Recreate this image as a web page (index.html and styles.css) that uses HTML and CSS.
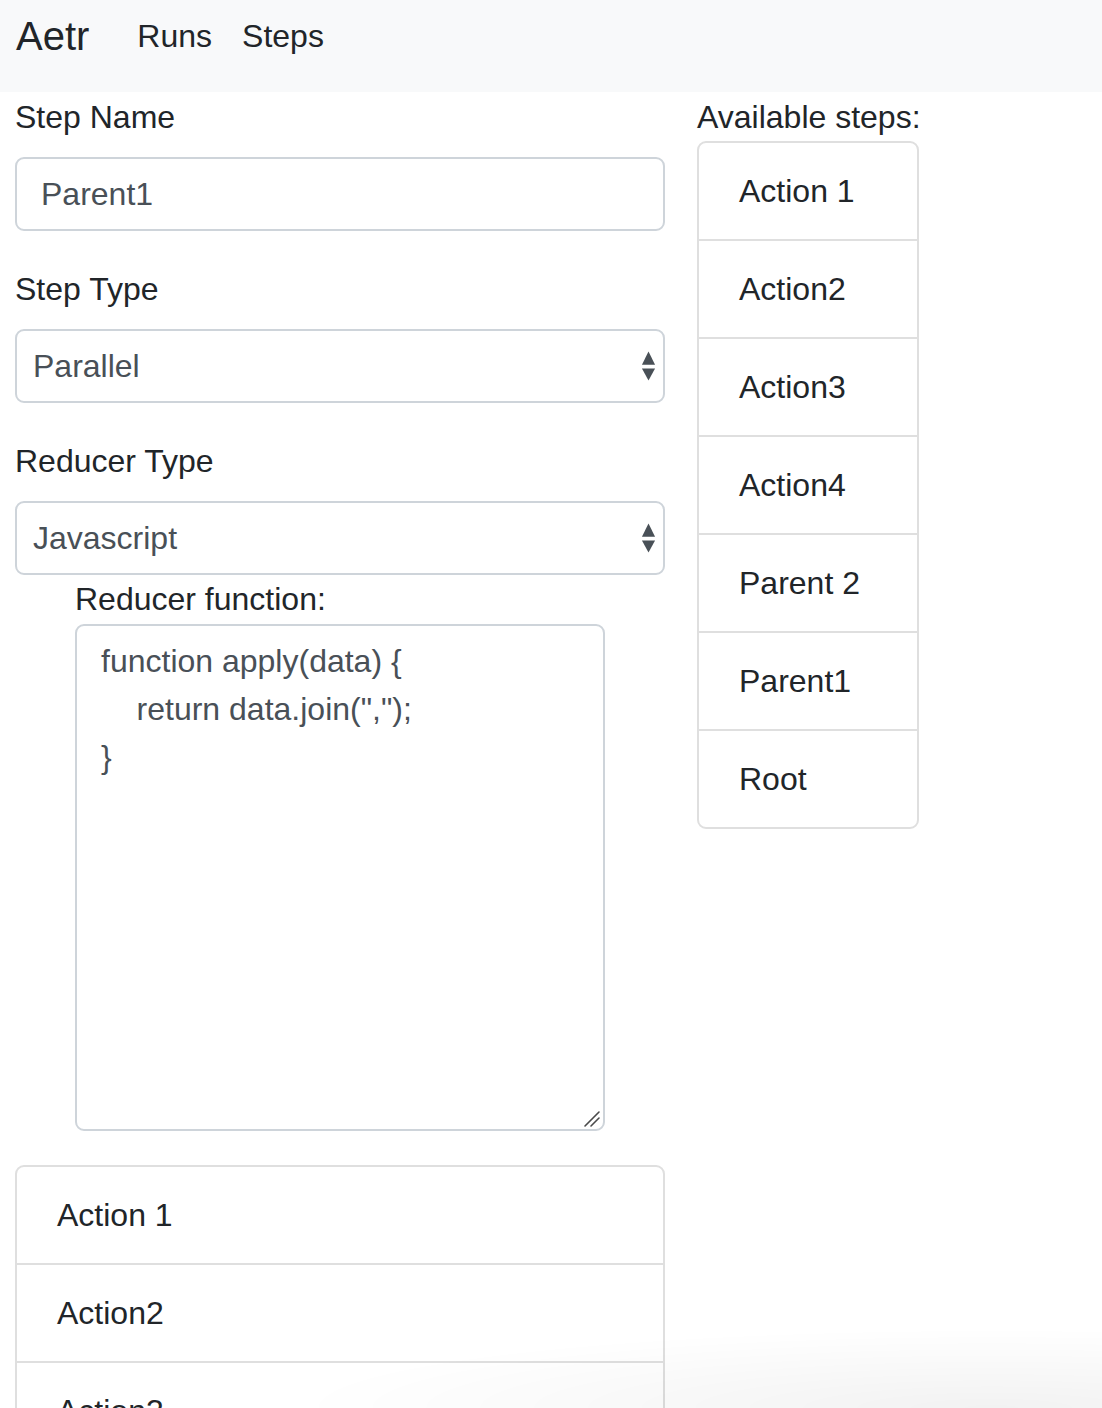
FILE: index.html
```html
<!DOCTYPE html>
<html lang="en">
<head>
<meta charset="utf-8">
<title>Aetr</title>
<link rel="stylesheet" href="styles.css">
</head>
<body>
<nav class="navbar">
  <a class="brand" href="#">Aetr</a>
  <a class="nav-link" href="#">Runs</a>
  <a class="nav-link" href="#">Steps</a>
</nav>
<main class="page">
  <section class="editor">
    <div class="form-group">
      <label class="label" for="step-name">Step Name</label>
      <input id="step-name" class="control" type="text" value="Parent1">
    </div>
    <div class="form-group">
      <label class="label" for="step-type">Step Type</label>
      <div class="select-wrap">
        <select id="step-type" class="control select">
          <option>Parallel</option>
          <option>Serial</option>
          <option>Action</option>
        </select>
        <svg class="select-arrows" width="16" height="32" viewBox="0 0 16 32"><path d="M8 0 L15 14 L1 14 Z" fill="#495057"/><path d="M1 18 L15 18 L8 31 Z" fill="#495057"/></svg>
      </div>
    </div>
    <div class="form-group reducer-group">
      <label class="label" for="reducer-type">Reducer Type</label>
      <div class="select-wrap">
        <select id="reducer-type" class="control select">
          <option>Javascript</option>
          <option>None</option>
        </select>
        <svg class="select-arrows" width="16" height="32" viewBox="0 0 16 32"><path d="M8 0 L15 14 L1 14 Z" fill="#495057"/><path d="M1 18 L15 18 L8 31 Z" fill="#495057"/></svg>
      </div>
    </div>
    <div class="reducer-fn">
      <label class="label label-tight" for="reducer-fn">Reducer function:</label>
      <div class="code-wrap">
        <textarea id="reducer-fn" class="control code">function apply(data) {
    return data.join(",");
}</textarea>
        <svg class="resize-grip" width="20" height="20" viewBox="0 0 20 20"><path d="M2 17 L16 3 M8 17 L16 9" stroke="#4a4a4a" stroke-width="1.6" stroke-linecap="round" fill="none"/></svg>
      </div>
    </div>
    <ul class="list-group">
      <li class="list-item">Action 1</li>
      <li class="list-item">Action2</li>
      <li class="list-item">Action3</li>
      <li class="list-item">Action4</li>
      <li class="list-item">Parent 2</li>
      <li class="list-item">Parent1</li>
      <li class="list-item">Root</li>
    </ul>
  </section>
  <aside class="available">
    <div class="label label-tight">Available steps:</div>
    <ul class="list-group">
      <li class="list-item">Action 1</li>
      <li class="list-item">Action2</li>
      <li class="list-item">Action3</li>
      <li class="list-item">Action4</li>
      <li class="list-item">Parent 2</li>
      <li class="list-item">Parent1</li>
      <li class="list-item">Root</li>
    </ul>
  </aside>
</main>
<div class="window-shade"></div>
</body>
</html>
```

FILE: styles.css
```css
* {
  box-sizing: border-box;
}

html, body {
  margin: 0;
  padding: 0;
}

body {
  font-family: "Liberation Sans", Arial, sans-serif;
  font-size: 32px;
  line-height: 48px;
  color: #212529;
  background: #ffffff;
}

.navbar {
  display: flex;
  align-items: flex-start;
  height: 92px;
  padding: 12px 16px 0 16px;
  background: #f8f9fa;
}

.brand {
  font-size: 40px;
  line-height: 48px;
  color: #212529;
  text-decoration: none;
  margin-right: 33px;
}

.nav-link {
  font-size: 32px;
  line-height: 48px;
  color: #212529;
  text-decoration: none;
  padding: 0 15px;
}

.page {
  display: flex;
  align-items: flex-start;
  gap: 32px;
  padding: 1px 15px 0 15px;
}

.editor {
  width: 650px;
  flex: none;
}

.form-group {
  margin-bottom: 34px;
}

.reducer-group {
  margin-bottom: 0;
}

.label {
  display: block;
  font-size: 32px;
  line-height: 48px;
  margin-bottom: 16px;
  color: #212529;
}

.label-tight {
  margin-bottom: 0;
}

.control {
  display: block;
  width: 100%;
  font-family: "Liberation Sans", Arial, sans-serif;
  font-size: 32px;
  line-height: 48px;
  color: #495057;
  background: #ffffff;
  border: 2px solid #ced4da;
  border-radius: 9px;
  outline: none;
}

input.control {
  height: 74px;
  padding: 11px 24px;
}

.select-wrap {
  position: relative;
}

.select {
  height: 74px;
  padding: 11px 40px 11px 16px;
  appearance: none;
  -webkit-appearance: none;
}

.select-arrows {
  position: absolute;
  right: 9px;
  top: 22px;
  width: 15px;
  height: 31px;
  pointer-events: none;
}

.reducer-fn {
  margin: 0 60px 34px 60px;
}

.code-wrap {
  position: relative;
  margin-top: 1px;
}

.code {
  height: 507px;
  padding: 11px 24px;
  resize: none;
  white-space: pre;
}

.resize-grip {
  position: absolute;
  right: 2px;
  bottom: 2px;
  width: 20px;
  height: 20px;
  pointer-events: none;
}

.available {
  width: 222px;
  flex: none;
}

.available .label {
  white-space: nowrap;
}

.list-group {
  list-style: none;
  margin: 0;
  padding: 0;
  border: 2px solid #dfdfdf;
  border-radius: 9px;
  overflow: hidden;
}

.list-item {
  height: 98px;
  padding: 24px 40px 0 40px;
  font-size: 32px;
  line-height: 48px;
  color: #212529;
  border-top: 2px solid #dfdfdf;
  white-space: nowrap;
}

.list-item:first-child {
  border-top: 0;
  height: 96px;
}

.window-shade {
  position: fixed;
  left: 0;
  right: 0;
  bottom: 0;
  height: 80px;
  pointer-events: none;
  background:
    radial-gradient(ellipse 700px 80px at 90% 100%, rgba(0, 0, 0, 0.05), rgba(0, 0, 0, 0) 100%);
}
```
